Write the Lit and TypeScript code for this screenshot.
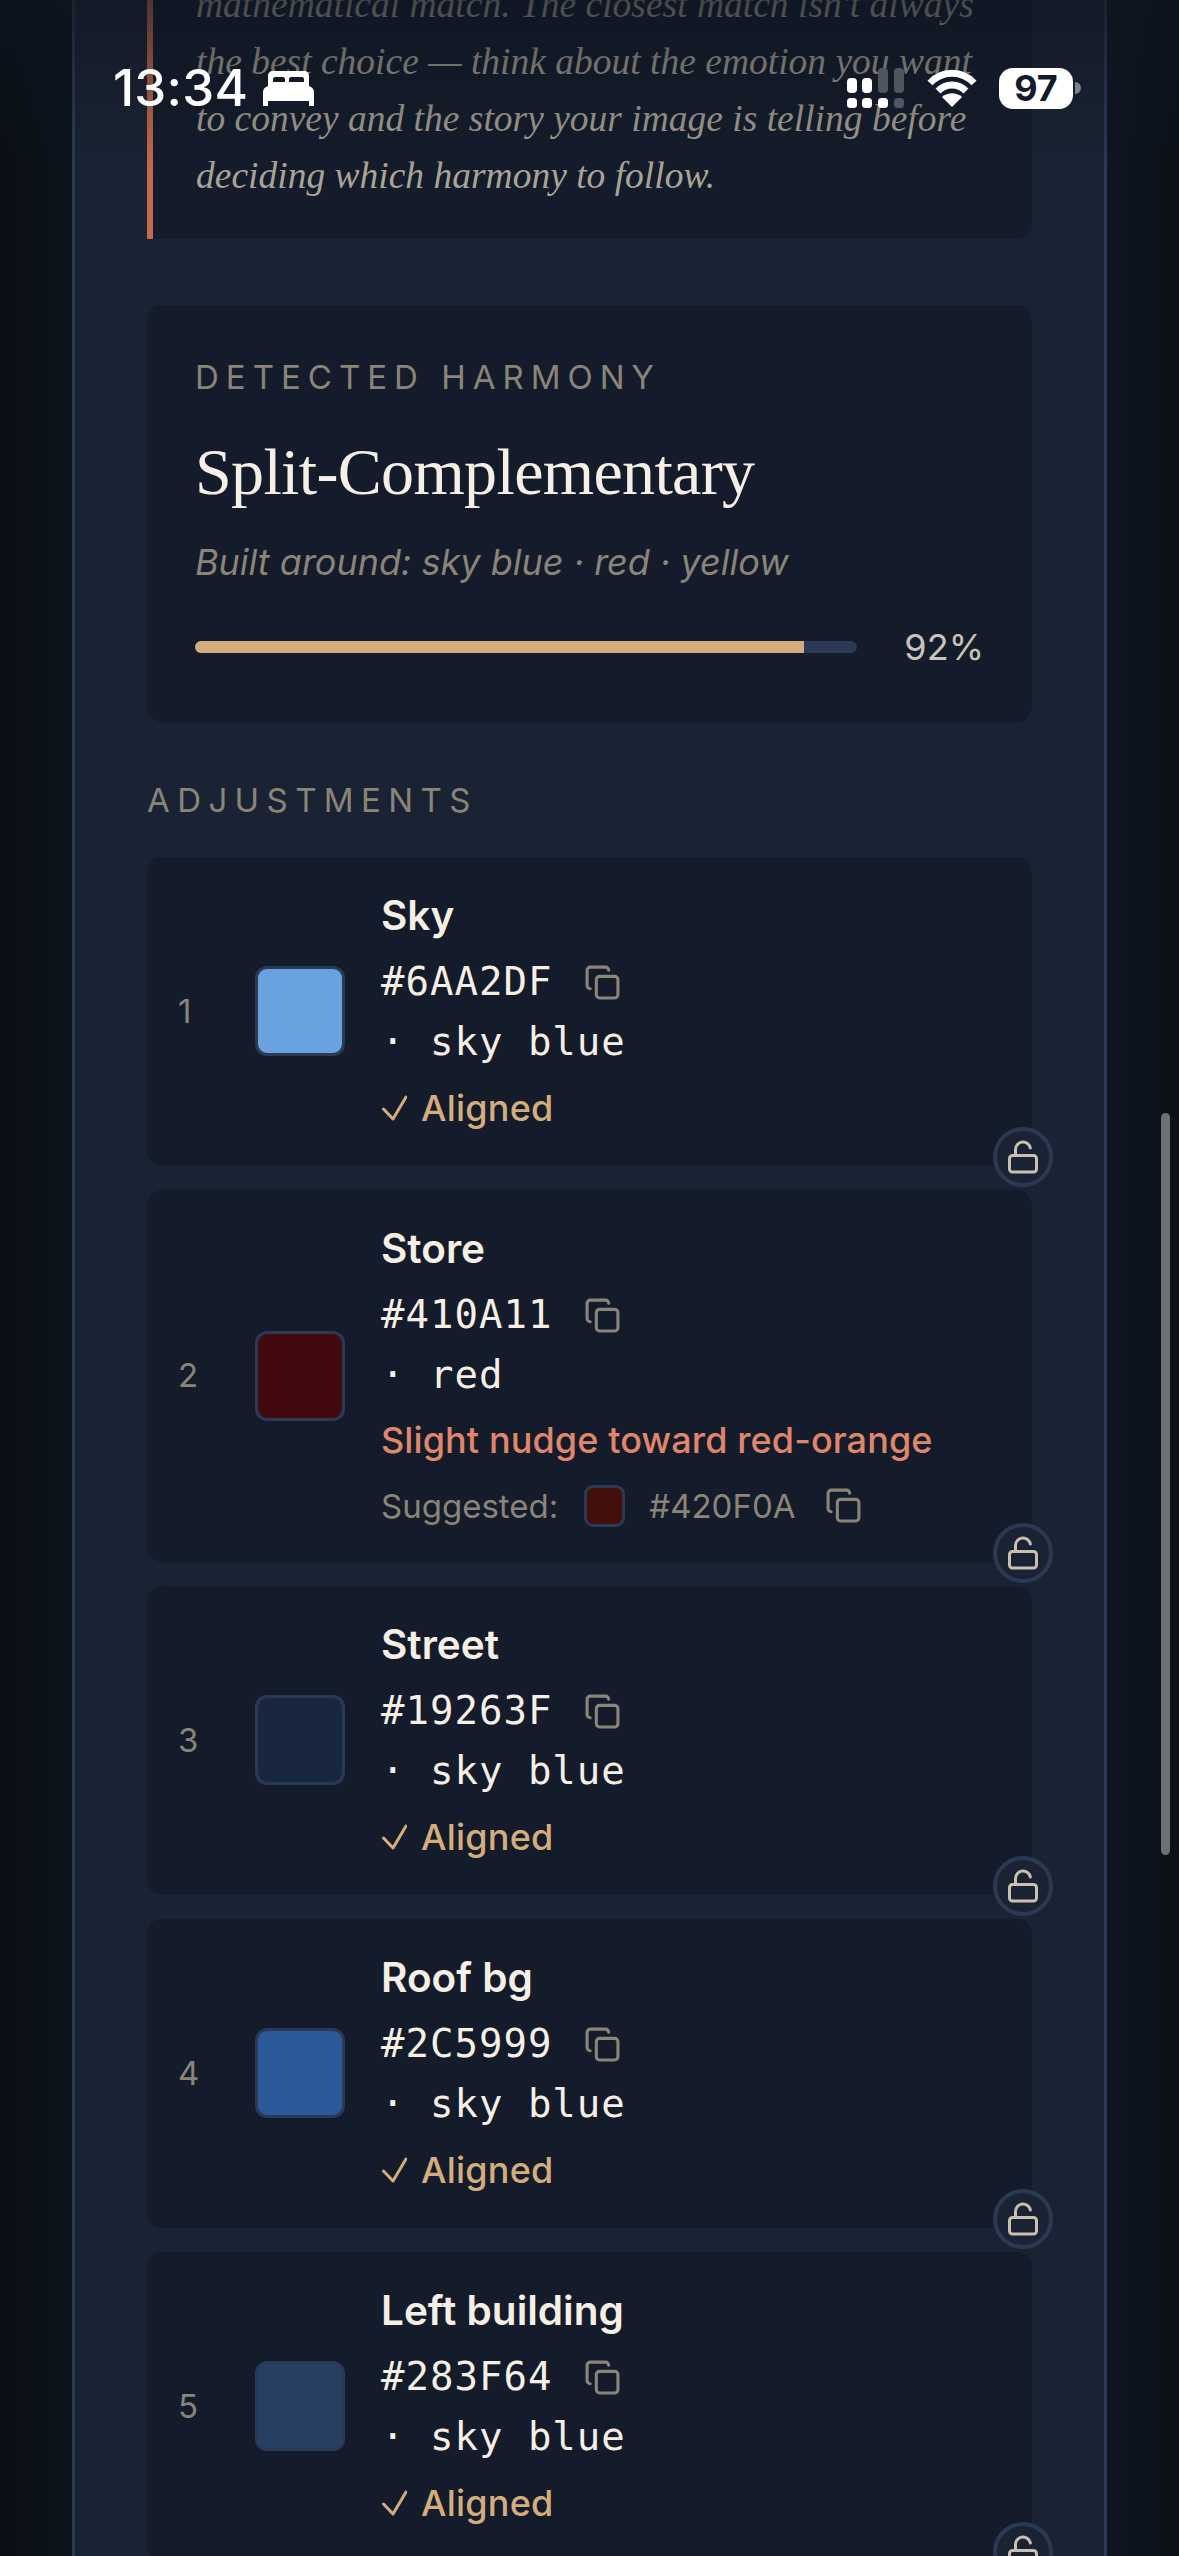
import { LitElement, html, css } from "lit";
import { customElement } from "lit/decorators.js";

type Row = { n: number; name: string; hex: string; tag: string; sw: string; nudge?: string; sug?: string };
const rows: Row[] = [
  { n: 1, name: "Sky", hex: "#6AA2DF", tag: "· sky blue", sw: "#6AA2DF" },
  { n: 2, name: "Store", hex: "#410A11", tag: "· red", sw: "#410A11", nudge: "Slight nudge toward red-orange", sug: "#420F0A" },
  { n: 3, name: "Street", hex: "#19263F", tag: "· sky blue", sw: "#19263F" },
  { n: 4, name: "Roof bg", hex: "#2C5999", tag: "· sky blue", sw: "#2C5999" },
  { n: 5, name: "Left building", hex: "#283F64", tag: "· sky blue", sw: "#283F64" },
];

const copyIcon = html`<svg class="copy" viewBox="0 0 24 24" fill="none" stroke="currentColor" stroke-width="2" stroke-linecap="round" stroke-linejoin="round"><rect x="8" y="8" width="14" height="14" rx="2"></rect><path d="M4 16c-1.1 0-2-.9-2-2V4c0-1.1.9-2 2-2h10c1.1 0 2 .9 2 2"></path></svg>`;
const lockIcon = html`<svg class="lock" viewBox="0 0 24 24" fill="none" stroke="currentColor" stroke-width="2" stroke-linecap="round" stroke-linejoin="round"><rect x="3" y="11" width="18" height="11" rx="2"></rect><path d="M7 11V7a5 5 0 0 1 9.9-1"></path></svg>`;
const checkIcon = html`<svg class="check" viewBox="0 0 25 26" fill="none" stroke="currentColor" stroke-width="3" stroke-linecap="round" stroke-linejoin="round"><polyline points="1.5,14 11,24 24,2"></polyline></svg>`;

@customElement("app-root")
export class AppRoot extends LitElement {
  static styles = css`
    :host {
      display: block;
      position: relative;
      width: 1179px;
      height: 2556px;
      overflow: hidden;
      background: linear-gradient(90deg, #0a0f16 0, #0d131c 72px, #0f1620 1107px, #0b1018 1179px);
      font-family: Inter, "Liberation Sans", sans-serif;
      color: #f5efe6;
    }
    .panel {
      margin: 0 72px;
      box-sizing: border-box;
      width: 1035px;
      min-height: 2700px;
      background: #1a2333;
      border-left: 3px solid #2a3a55;
      border-right: 3px solid #2a3a55;
      padding: 0 72px;
    }
    .callout {
      margin-top: -50px;
      background: #141b2a;
      border-left: 6px solid #c4694d;
      border-radius: 0 15px 15px 0;
      padding: 26px 48px 35px 43px;
      font-family: "Liberation Serif", serif;
      font-style: italic;
      font-size: 37.5px;
      line-height: 57px;
      color: #aaa496;
      white-space: nowrap;
    }
    .harmony {
      margin-top: 66px;
      background: #141b2a;
      border-radius: 15px;
      padding: 48px 48px 0 48px;
      height: 417px;
      box-sizing: border-box;
    }
    .eyebrow {
      font-size: 33px;
      line-height: 48px;
      letter-spacing: 7px;
      color: #8a8578;
    }
    .title {
      font-family: "Liberation Serif", serif;
      font-size: 66px;
      letter-spacing: -0.66px;
      line-height: 80px;
      margin-top: 31px;
      color: #f5efe6;
    }
    .sub {
      font-style: italic;
      font-size: 36px;
      line-height: 50px;
      margin-top: 25px;
      color: #8a8578;
    }
    .meter {
      display: flex;
      align-items: center;
      gap: 47px;
      margin-top: 35px;
      height: 50px;
    }
    .track {
      flex: 1;
      height: 12px;
      border-radius: 6px;
      background: #2a3a55;
      overflow: hidden;
    }
    .fill {
      height: 100%;
      background: #d4ad7d;
    }
    .pct {
      font-size: 36px;
      color: #c9c3b8;
    }
    .adj {
      margin-top: 54px;
      margin-bottom: 33px;
      letter-spacing: 7.4px;
    }
    .row {
      position: relative;
      display: flex;
      align-items: center;
      background: #141b2a;
      border-radius: 15px;
      padding: 32px 30px 31px 31px;
      gap: 36px;
      margin-bottom: 24px;
    }
    .num {
      width: 41px;
      font-size: 33px;
      color: #8a8578;
      margin-top: -3px;
    }
    .sw {
      width: 90px;
      height: 90px;
      box-sizing: border-box;
      border: 3px solid #2a3a55;
      border-radius: 12px;
      flex: none;
      margin-top: -2px;
    }
    .body { display: flex; flex-direction: column; }
    .name {
      font-weight: 600;
      font-size: 40.5px;
      line-height: 54px;
      color: #f5efe6;
    }
    .hex {
      display: flex;
      align-items: center;
      gap: 32px;
      height: 54px;
      margin-top: 11px;
      font-family: "DejaVu Sans Mono", monospace;
      font-size: 39px;
      letter-spacing: 1px;
    }
    .hex .copy { margin-top: 3px; }
    .tag {
      font-family: "DejaVu Sans Mono", monospace;
      font-size: 39px;
      letter-spacing: 1px;
      line-height: 54px;
      margin-top: 7px;
    }
    .status {
      display: flex;
      align-items: center;
      gap: 14px;
      font-size: 36px;
      font-weight: 500;
      letter-spacing: 0.2px;
      line-height: 54px;
      margin-top: 12px;
      padding-left: 1px;
      color: #d4ad7d;
    }
    .nudge {
      font-size: 36px;
      font-weight: 500;
      letter-spacing: 0.1px;
      line-height: 54px;
      margin-top: 11px;
      color: #e0866a;
    }
    .sug {
      display: flex;
      align-items: center;
      gap: 24px;
      height: 51px;
      margin-top: 13px;
      font-size: 33px;
      color: #8a8578;
    }
    .sug .copy { margin-left: 6px; }
    .mini {
      width: 41px;
      height: 42px;
      box-sizing: border-box;
      border: 3px solid #2a3a55;
      border-radius: 9px;
      margin-left: 2px;
    }
    .copy {
      width: 37px;
      height: 37px;
      color: #8a8578;
      flex: none;
    }
    .check { width: 25px; height: 26px; flex: none; }
    .lockbtn {
      position: absolute;
      right: -21px;
      bottom: -21px;
      width: 60px;
      height: 60px;
      box-sizing: border-box;
      border: 4px solid #2a3a55;
      border-radius: 50%;
      background: #1a2333;
      display: flex;
      align-items: center;
      justify-content: center;
      color: #c9c0b0;
      z-index: 1;
    }
    .lock { width: 36px; height: 36px; }
    .scrim {
      position: absolute;
      left: 0;
      top: 0;
      width: 100%;
      height: 170px;
      background: linear-gradient(180deg, rgba(14,21,32,0.65) 0, rgba(14,21,32,0.35) 40%, rgba(14,21,32,0) 100%);
      pointer-events: none;
    }
    .scrollbar {
      position: absolute;
      left: 1161px;
      top: 1113px;
      width: 9px;
      height: 742px;
      border-radius: 5px;
      background: #6b6f78;
    }
    .sb {
      position: absolute;
      left: 113px;
      top: 60px;
      width: 968px;
      height: 56px;
      display: flex;
      align-items: center;
      color: #fff;
    }
    .time {
      font-size: 51px;
      font-weight: 500;
      line-height: 56px;
      letter-spacing: 0.2px;
    }
    .bed { width: 51px; height: 35px; margin-left: 15px; margin-top: 1px; }
    .spacer { flex: 1; }
    .cell { width: 58px; height: 40px; margin-top: -1px; }
    .wifi { width: 50px; height: 38px; margin-left: 22px; }
    .batt {
      margin-left: 22px;
      width: 74px;
      height: 41px;
      border-radius: 14px;
      background: #fff;
      color: #141b2a;
      font-size: 36px;
      font-weight: 700;
      line-height: 41px;
      text-align: center;
    }
    .nub {
      width: 6px;
      height: 12px;
      margin-left: 2px;
      background: #7f838c;
      border-radius: 0 6px 6px 0;
    }
  `;

  private renderRow(r: Row) {
    return html`<div class="row">
      <div class="num">${r.n}</div>
      <div class="sw" style="background:${r.sw}"></div>
      <div class="body">
        <div class="name">${r.name}</div>
        <div class="hex"><span>${r.hex}</span>${copyIcon}</div>
        <div class="tag">${r.tag}</div>
        ${r.nudge
          ? html`<div class="nudge">${r.nudge}</div>
              <div class="sug">
                <span>Suggested:</span>
                <span class="mini" style="background:${r.sug}"></span>
                <span>${r.sug}</span>
                ${copyIcon}
              </div>`
          : html`<div class="status">${checkIcon}<span>Aligned</span></div>`}
      </div>
      <div class="lockbtn">${lockIcon}</div>
    </div>`;
  }

  render() {
    return html`
      <div class="panel">
        <div class="callout">
          mathematical match. The closest match isn't always<br />
          the best choice — think about the emotion you want<br />
          to convey and the story your image is telling before<br />
          deciding which harmony to follow.
        </div>
        <div class="harmony">
          <div class="eyebrow">DETECTED HARMONY</div>
          <div class="title">Split-Complementary</div>
          <div class="sub">Built around: sky blue · red · yellow</div>
          <div class="meter">
            <div class="track"><div class="fill" style="width:92%"></div></div>
            <div class="pct">92%</div>
          </div>
        </div>
        <div class="eyebrow adj">ADJUSTMENTS</div>
        ${rows.map((r) => this.renderRow(r))}
      </div>
      <div class="scrim"></div>
      <div class="scrollbar"></div>
      <div class="sb">
        <span class="time">13:34</span>
        <svg class="bed" viewBox="0 0 51 35" fill="currentColor">
          <path fill-rule="evenodd" d="M10 0H41C44 0 46 2 46 5V15C49 16 51 18 51 21V35H46V30H5V35H0V21C0 18 2 16 5 15V5C5 2 7 0 10 0ZM12 6C11 6 10 7 10 8V11H22V8C22 7 21 6 20 6ZM28 6C27 6 26 7 26 8V11H41V8C41 7 40 6 39 6Z"></path>
        </svg>
        <span class="spacer"></span>
        <svg class="cell" viewBox="0 0 58 40" fill="#fff">
          <rect x="0" y="10" width="10" height="15" rx="4"></rect>
          <rect x="15" y="10" width="10" height="15" rx="4"></rect>
          <rect x="31" y="0" width="10" height="25" rx="4" fill="#50565f"></rect>
          <rect x="47" y="0" width="10" height="25" rx="4" fill="#50565f"></rect>
          <rect x="0" y="30" width="10" height="10" rx="3.5"></rect>
          <rect x="15" y="30" width="10" height="10" rx="3.5"></rect>
          <rect x="31" y="30" width="10" height="10" rx="3.5"></rect>
          <rect x="47" y="30" width="10" height="10" rx="3.5" fill="#50565f"></rect>
        </svg>
        <svg class="wifi" viewBox="0 0 50 38" fill="none" stroke="#fff" stroke-width="7" stroke-linecap="butt">
          <path d="M3 14C15 1 35 1 47 14"></path>
          <path d="M11 22C19 14 31 14 39 22"></path>
          <path d="M25 38L15 28C21 23 29 23 35 28Z" fill="#fff" stroke="none"></path>
        </svg>
        <span class="batt">97</span>
        <span class="nub"></span>
      </div>
    `;
  }
}
